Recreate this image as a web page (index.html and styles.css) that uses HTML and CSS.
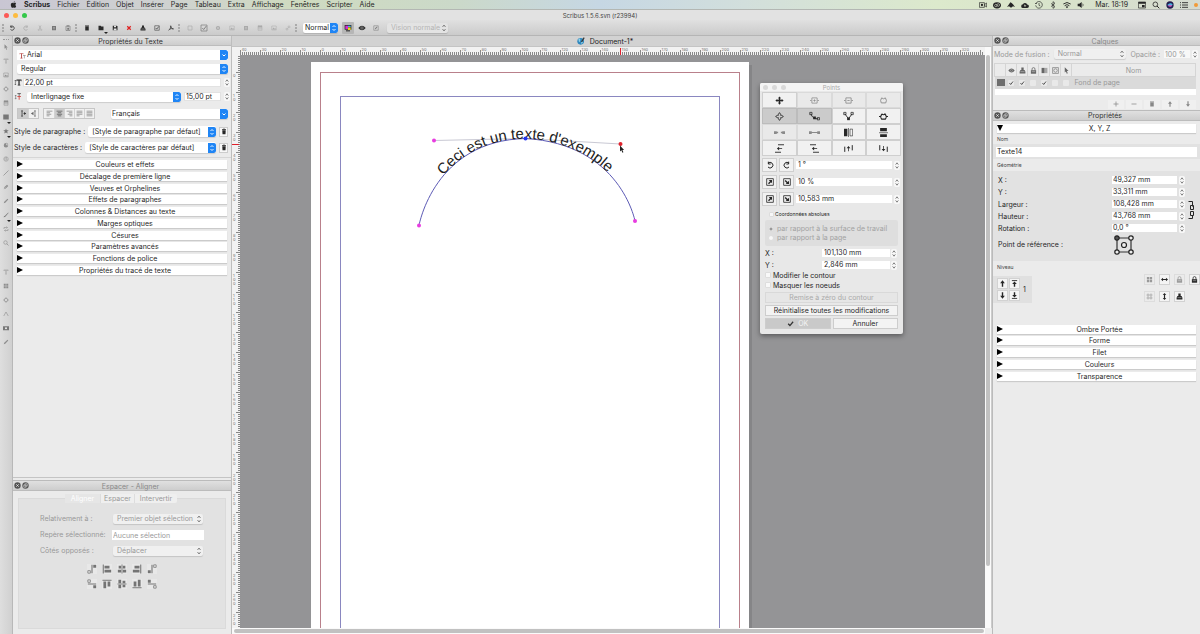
FILE: index.html
```html
<!DOCTYPE html>
<html lang="fr">
<head>
<meta charset="utf-8">
<title>Scribus 1.5.6.svn (r23994)</title>
<link rel="stylesheet" href="styles.css">
</head>
<body>
<svg class="defs" aria-hidden="true">
<symbol id="apple" viewBox="0 0 12 12"><path fill="currentColor" d="M8.2.5C7 .6 6 1.700 6.200 2.900 7.300 2.900 8.300 1.700 8.200.5M9.400 6.300c0-1.300 1-1.900 1.100-2C9.800 3.300 8.800 3.200 8.400 3.200 7.500 3.100 6.600 3.700 6.100 3.700S4.900 3.200 4.200 3.200C2.800 3.200 1.400 4.400 1.400 6.700 1.400 9 3 11.700 4.200 11.700 4.900 11.700 5.200 11.200 6.100 11.200s1.200.5 1.900.5C9.300 11.700 10.300 9.700 10.600 8.800 9.700 8.400 9.400 7.500 9.400 6.300"/></symbol>
<symbol id="undo" viewBox="0 0 12 12"><path d="M3 3.500A4.200 4.200 0 1 1 3 9M3.500 1v3.500H7" fill="none" stroke="currentColor" stroke-width="1.500"/></symbol>
<symbol id="redo" viewBox="0 0 12 12"><path d="M9 3.500A4.200 4.200 0 1 0 9 9M8.500 1v3.500H5" fill="none" stroke="currentColor" stroke-width="1.500"/></symbol>
<symbol id="cut" viewBox="0 0 12 12"><path d="M4 1l4 8M8 1L4 9" fill="none" stroke="currentColor" stroke-width="1.200"/><circle cx="3.500" cy="9.800" r="1.300" fill="none" stroke="currentColor"/><circle cx="8.500" cy="9.800" r="1.300" fill="none" stroke="currentColor"/></symbol>
<symbol id="box" viewBox="0 0 12 12"><path d="M2 2h8v8.500H2z" fill="currentColor"/><path d="M4 5h4M4 7.500h4" stroke="#ddd" stroke-width=".7"/></symbol>
<symbol id="frame" viewBox="0 0 12 12"><path d="M2 2h8v8H2z" fill="none" stroke="currentColor" stroke-width="1.300"/></symbol>
<symbol id="paste" viewBox="0 0 12 12"><path d="M2 2h8v9H2z" fill="none" stroke="currentColor" stroke-width="1.300"/><path d="M4 1h4v2H4zM4.500 5.500h3.500v4H4.500z" fill="currentColor"/></symbol>
<symbol id="file" viewBox="0 0 12 12"><path d="M2.500 2.800h7v8h-7zM2 1.200h8v1.200H2z" fill="currentColor"/></symbol>
<symbol id="folder" viewBox="0 0 12 12"><path d="M1 1.500h4.500L6.500 3H11v7.500H1z" fill="currentColor"/></symbol>
<symbol id="save" viewBox="0 0 12 12"><path d="M1.500 1.500h8L11 3v7.500H1.500z" fill="currentColor"/><path d="M4 1.500h4v3H4zM3.500 7H9v3.500H3.500z" fill="#e5e5e5"/></symbol>
<symbol id="cross" viewBox="0 0 12 12"><path d="M2.500 2.500l7 7M9.500 2.500l-7 7" stroke="currentColor" stroke-width="2.500"/></symbol>
<symbol id="print" viewBox="0 0 12 12"><path d="M4 1h4v4h1.500L11 8v3H1V8l1.500-3H4z" fill="currentColor"/><path d="M2.500 8h7" stroke="#ddd" stroke-width=".8"/></symbol>
<symbol id="check" viewBox="0 0 12 12"><path d="M1.500 1.500h9v9h-9z" fill="none" stroke="currentColor"/><path d="M3.500 6l2 2.300L9.500 3" fill="none" stroke="currentColor" stroke-width="1.300"/></symbol>
<symbol id="tick" viewBox="0 0 12 12"><path d="M2 6.500L5 9.500 10.500 3" fill="none" stroke="currentColor" stroke-width="2.200"/></symbol>
<symbol id="pdf" viewBox="0 0 12 12"><path d="M5 1.500c1 4 2.500 6 6 6.500M5.800 1.500C6 5 4 9 1 10.500M3 8.500Q6.500 6.500 11 7.500" fill="none" stroke="currentColor" stroke-width="1.400"/></symbol>
<symbol id="circle" viewBox="0 0 12 12"><circle cx="6" cy="6" r="4.200" fill="currentColor"/><path d="M4 6h4M6 4v4" stroke="#ddd"/></symbol>
<symbol id="image" viewBox="0 0 12 12"><path d="M1.500 2h9v8h-9z" fill="none" stroke="currentColor"/><path d="M2.500 9l2.500-4 2 2.500L8.500 6l1.500 3z" fill="currentColor"/></symbol>
<symbol id="link" viewBox="0 0 12 12"><path d="M4 8l4-4M5.500 4L8 1.500 10.500 4 8 6.500M4 5.500L1.500 8 4 10.500 6.500 8" fill="none" stroke="currentColor" stroke-width="1.300"/></symbol>
<symbol id="eye" viewBox="0 0 12 12"><path d="M.5 6Q6-1 11.500 6 6 13 .5 6" fill="currentColor"/><circle cx="6" cy="6" r="1.800" fill="none" stroke="#ccc" stroke-width=".7"/></symbol>
<symbol id="color" viewBox="0 0 12 12"><path d="M1 1.500h10v7H1z" fill="#222"/><path d="M2 2.500h4v5H2z" fill="#d22bd2"/><path d="M6 2.500h4v2H6z" fill="#40b5ea"/><path d="M6 5h4v4H6z" fill="#e9d31d"/><path d="M3 9.500h6v1.500H3z" fill="#222"/></symbol>
<symbol id="edit" viewBox="0 0 12 12"><path d="M1.500 1.500h9v9h-9z" fill="none" stroke="currentColor"/><path d="M4 8.500L4.500 6 8 3l1 1.200L5.800 8z" fill="currentColor"/></symbol>
<symbol id="cursor" viewBox="0 0 12 12"><path d="M3 .5v9l2-1.800 1.500 3.800 1.700-.7L6.600 7H9.500z" fill="currentColor"/></symbol>
<symbol id="ttool" viewBox="0 0 12 12"><path d="M1.500 1.500h9v2.500H9.700L9 2.600H6.700v7l1.500.8H3.800l1.500-.8v-7H3L2.300 4h-.8z" fill="currentColor"/></symbol>
<symbol id="gear" viewBox="0 0 12 12"><circle cx="6" cy="6" r="3.500" fill="none" stroke="currentColor" stroke-width="1.300"/><path d="M6 .8v2M6 9.200v2M.8 6h2M9.200 6h2" stroke="currentColor" stroke-width="1.500"/></symbol>
<symbol id="table" viewBox="0 0 12 12"><path d="M2 1.500h8v9H2zM2 4.500h8M2 7.500h8" fill="none" stroke="currentColor"/><path d="M2 1.500h8v3H2z" fill="currentColor"/></symbol>
<symbol id="shape" viewBox="0 0 12 12"><path d="M.5 1h11v10H.5z" fill="currentColor"/></symbol>
<symbol id="star" viewBox="0 0 12 12"><path d="M6 .8l1.500 3.700 4 .2-3.100 2.500 1.100 3.900L6 9l-3.500 2.100 1.100-3.900L.5 4.700l4-.2z" fill="currentColor"/></symbol>
<symbol id="pie" viewBox="0 0 12 12"><path d="M6 2v4l4.500 1A4.500 4.500 0 1 1 6 2" fill="currentColor"/><path d="M7 1v3.800h3.800" fill="currentColor"/></symbol>
<symbol id="spiral" viewBox="0 0 12 12"><circle cx="6" cy="6" r="4.500" fill="none" stroke="currentColor"/><path d="M6 6q2-2 2 .5T5 8 4 4.500 8 3" fill="none" stroke="currentColor"/></symbol>
<symbol id="line" viewBox="0 0 12 12"><path d="M1 11L11 1" stroke="currentColor" stroke-width="1.500"/></symbol>
<symbol id="pen" viewBox="0 0 12 12"><path d="M1.500 10.500L3 6l5-4.500 2.500 2.300L5.500 9z" fill="currentColor"/><path d="M1.500 10.500L7 5" stroke="#ddd" stroke-width=".7"/></symbol>
<symbol id="pencil" viewBox="0 0 12 12"><path d="M1.500 10.500L2.500 7.500l6.500-6 1.500 1.500L4.500 9.500z" fill="currentColor"/></symbol>
<symbol id="brush" viewBox="0 0 12 12"><path d="M1 10.500q1-3 3-3L10.500 1 11 2 5.500 8.500q-1 2-4.500 2" fill="currentColor"/></symbol>
<symbol id="rotate" viewBox="0 0 12 12"><path d="M2 6V3h6.500M10 6v3H3.500M7 1l2 2-2 2M5 7L3 9l2 2" fill="none" stroke="currentColor" stroke-width="1.200"/></symbol>
<symbol id="search" viewBox="0 0 12 12"><circle cx="5" cy="5" r="3.500" fill="none" stroke="currentColor" stroke-width="1.200"/><path d="M7.500 7.500L11 11" stroke="currentColor" stroke-width="1.500"/></symbol>
<symbol id="grid4" viewBox="0 0 12 12"><path d="M1.500 1.500h4v4h-4zM6.500 1.500h4v4h-4zM1.500 6.500h4v4h-4zM6.500 6.500h4v4h-4z" fill="currentColor"/></symbol>
<symbol id="grid4o" viewBox="0 0 12 12"><path d="M2 2h3v3H2zM7 2h3v3H7zM2 7h3v3H2zM7 7h3v3H7z" fill="none" stroke="currentColor"/></symbol>
<symbol id="measure" viewBox="0 0 12 12"><path d="M1.500 10L6 2l4.500 8" fill="none" stroke="currentColor" stroke-width="1.200"/></symbol>
<symbol id="camera" viewBox="0 0 12 12"><path d="M0 2.500h12v8H0z" fill="currentColor"/><circle cx="6" cy="6.500" r="2" fill="#eee"/></symbol>
<symbol id="trash" viewBox="0 0 12 12"><path d="M2 2h8M4.500 1h3" stroke="currentColor" stroke-width="1.500"/><path d="M2.500 3.500h7L9 11.500H3z" fill="currentColor"/></symbol>
<symbol id="tfont" viewBox="0 0 12 12"><path d="M1 2h6.500v2H6.700L6.500 3H5v7h1v1H2.500v-1h1V3H2L1.800 4H1z" fill="#b4413d"/><path d="M7 6h4.500M9.200 6v5" stroke="#777"/></symbol>
<symbol id="tsize" viewBox="0 0 12 12"><path d="M3.500 1H12v3h-.9L10.500 2.500H8.800V10H10v1H5.500v-1h1.200V2.500H5L4.400 4h-.9z" fill="#222"/><path d="M1.500 2v8M.2 3.500L1.500 2l1.300 1.500M.2 8.500l1.300 1.500 1.300-1.500" fill="none" stroke="#222" stroke-width=".8"/></symbol>
<symbol id="tlead" viewBox="0 0 12 12"><path d="M5 1h6M8 1v4" stroke="#444" stroke-width="1.300"/><path d="M5 6h6M8 6v5.500" stroke="#d0413d" stroke-width="1.500"/><path d="M2 4v6M1 5l1-1.500L3 5M1 9l1 1.500L3 9" fill="none" stroke="#444" stroke-width=".8"/></symbol>
<symbol id="ltr" viewBox="0 0 12 12"><path d="M2 1.500h3M2 10.500h3M3.500 1.500v9M6 6h4" stroke="currentColor" stroke-width="1.300"/><path d="M7 3.500L10.500 6 7 8.500z" fill="currentColor"/></symbol>
<symbol id="rtl" viewBox="0 0 12 12"><path d="M7 1.500h3M7 10.500h3M8.500 1.500v9" stroke="currentColor" stroke-width="1.300"/><path d="M6 3L1.500 6 6 9z" fill="currentColor"/></symbol>
<symbol id="aleft" viewBox="0 0 12 12"><path d="M1 2h10M1 4.700h6M1 7.300h8M1 10h5" stroke="currentColor"/></symbol>
<symbol id="acenter" viewBox="0 0 12 12"><path d="M1 2h10M3 4.700h6M1.500 7.300h9M3 10h6" stroke="currentColor"/></symbol>
<symbol id="aright" viewBox="0 0 12 12"><path d="M1 2h10M5 4.700h6M3 7.300h8M6 10h5" stroke="currentColor"/></symbol>
<symbol id="ajust" viewBox="0 0 12 12"><path d="M1 2h10M1 4.700h10M1 7.300h10M1 10h5" stroke="currentColor"/></symbol>
<symbol id="aforce" viewBox="0 0 12 12"><path d="M1 2h10M1 4.700h10M1 7.300h10M1 10h10" stroke="currentColor"/></symbol>
<symbol id="close" viewBox="0 0 12 12"><circle cx="6" cy="6" r="5.500" fill="currentColor"/><path d="M4 4l4 4M8 4L4 8" stroke="#e8e8e8" stroke-width="1.500"/></symbol>
<symbol id="float" viewBox="0 0 12 12"><circle cx="6" cy="6" r="5.500" fill="currentColor"/><path d="M5 3h4v4H5zM3 5h4v4H3z" fill="none" stroke="#e0e0e0" stroke-width=".9"/></symbol>
<symbol id="steps" viewBox="0 0 6 10"><path d="M1.500 4L3 2l1.500 2M1.500 6L3 8l1.500-2" fill="none" stroke="currentColor" stroke-width=".9"/></symbol>
<symbol id="d1" viewBox="0 0 12 12"><path d="M1 8h3v3H1z" fill="none" stroke="currentColor" stroke-width=".9"/><path d="M6 1v10" stroke="currentColor" stroke-width="1.300"/><path d="M7.500 1h3.500v3.500H7.500z" fill="currentColor"/></symbol>
<symbol id="d2" viewBox="0 0 12 12"><path d="M1.500 .5v11" stroke="currentColor" stroke-width="1.300"/><path d="M3 2h6v3.300H3zM3 7h8v3.300H3z" fill="currentColor"/></symbol>
<symbol id="d3" viewBox="0 0 12 12"><path d="M6 .5v11" stroke="currentColor"/><path d="M2 2h3v3.300H2zM7 2h3v3.300H7zM1 7h4v3.300H1zM7 7h4v3.300H7z" fill="currentColor"/></symbol>
<symbol id="plus4" viewBox="0 0 12 12"><path d="M6 .5L8 3H7v2h2V4l2.500 2L9 8V7H7v2h1l-2 2.500L4 9h1V7H3v1L.5 6 3 4v1h2V3H4z" fill="currentColor"/></symbol>
<symbol id="move4" viewBox="0 0 12 12"><path d="M6 .8L7.500 3v1.500H9L11.200 6 9 7.500H7.500V9L6 11.200 4.500 9V7.500H3L.8 6 3 4.500h1.500V3z" fill="none" stroke="currentColor" stroke-width="1.100"/></symbol>
<symbol id="nadd" viewBox="0 0 12 12"><path d="M2.500 2.500h7v7h-7zM0 6h2M10 6h2M6 4.500v3M4.500 6h3" fill="none" stroke="currentColor"/></symbol>
<symbol id="ndel" viewBox="0 0 12 12"><path d="M2.500 2.500h7v7h-7zM0 6h2M10 6h2M4.500 6h3" fill="none" stroke="currentColor" stroke-width="1.100"/></symbol>
<symbol id="nreset" viewBox="0 0 12 12"><path d="M3.500 2.500Q1 6 3 9.200h6Q11 6 8.500 2.500 6 5 3.500 2.500" fill="none" stroke="currentColor" stroke-width="1.200"/></symbol>
<symbol id="nsmooth" viewBox="0 0 12 12"><path d="M2 3q2 6 8 5.500" fill="none" stroke="currentColor"/><path d="M.8 1.500h2.500V4H.8zM9 7.200h2.500v2.500H9z" fill="none" stroke="currentColor" stroke-width=".8"/><path d="M4.500 6h3v3h-3z" fill="currentColor"/></symbol>
<symbol id="ncorner" viewBox="0 0 12 12"><path d="M2 3l4 5.500L10 3" fill="none" stroke="currentColor"/><path d="M.8 1.500h2.500V4H.8zM8.700 1.500h2.500V4H8.700z" fill="none" stroke="currentColor" stroke-width=".8"/><path d="M4.500 7h3v3h-3z" fill="currentColor"/></symbol>
<symbol id="nloop" viewBox="0 0 12 12"><path d="M4 2.500Q1 6 3.500 9.500h5Q11 6 8 2.500 6 5 4 2.500M0 6h2.500M9.500 6H12" fill="none" stroke="currentColor" stroke-width="1.400"/></symbol>
<symbol id="nopen" viewBox="0 0 12 12"><path d="M0 4.500h3v3H0zM9 4.500h3v3H9zM3 5.300h1.500v1.400H3zM7.500 5.300H9v1.400H7.500z" fill="currentColor"/></symbol>
<symbol id="nclose" viewBox="0 0 12 12"><path d="M0 4.500h3v3H0zM9 4.500h3v3H9zM3 5.500h6v1H3z" fill="currentColor"/></symbol>
<symbol id="mirh" viewBox="0 0 12 12"><path d="M0 1h4.500v10H0z" fill="currentColor"/><path d="M6 0v12M8 1.500h3.500v9H8z" fill="none" stroke="currentColor" stroke-width=".8"/></symbol>
<symbol id="mirv" viewBox="0 0 12 12"><path d="M1.500 0h9v4.300h-9zM1.500 8.300h9V12h-9z" fill="currentColor"/><path d="M0 6.300h12" stroke="currentColor" stroke-width=".8"/></symbol>
<symbol id="shr" viewBox="0 0 12 12"><path d="M4 1h8M0 11h8" stroke="currentColor" stroke-width="1.200"/><path d="M2.500 6l3-2.500v2h4v1h-4v2z" fill="currentColor"/></symbol>
<symbol id="shl" viewBox="0 0 12 12"><path d="M0 1h8M4 11h8" stroke="currentColor" stroke-width="1.200"/><path d="M2.500 6l3-2.500v2h4v1h-4v2z" fill="currentColor"/></symbol>
<symbol id="shu" viewBox="0 0 12 12"><path d="M1 3.500v7M11 1.500v7" stroke="currentColor" stroke-width="1.300"/><path d="M6 2.500l2.500 3h-2v4h-1v-4h-2z" fill="currentColor"/></symbol>
<symbol id="shd" viewBox="0 0 12 12"><path d="M1 1.500v7M11 3.500v7" stroke="currentColor" stroke-width="1.300"/><path d="M6 9.500l2.500-3h-2v-4h-1v4h-2z" fill="currentColor"/></symbol>
<symbol id="grow" viewBox="0 0 12 12"><path d="M1 1h10v10H1z" fill="none" stroke="currentColor" stroke-width="1.200"/><path d="M4 3h5v5L7.500 6.500 4.500 9.500 3 8l3-3z" fill="currentColor"/></symbol>
<symbol id="shrink" viewBox="0 0 12 12"><path d="M1 1h10v10H1z" fill="none" stroke="currentColor" stroke-width="1.200"/><path d="M9 4v5H4l1.500-1.500-3-3L4 3l3 3z" fill="currentColor"/></symbol>
<symbol id="lock" viewBox="0 0 12 12"><path d="M1.500 5.500h9v6h-9z" fill="currentColor"/><path d="M3.500 6V3.500a2.500 2.500 0 0 1 5 0V6" fill="none" stroke="currentColor" stroke-width="1.300"/><path d="M3 8h6" stroke="#ddd" stroke-width=".8"/></symbol>
<symbol id="half" viewBox="0 0 12 12"><path d="M1 1.500h5v9H1z" fill="currentColor"/><path d="M6 1.500h5v9H6z" fill="currentColor" opacity=".5"/></symbol>
<symbol id="outline" viewBox="0 0 12 12"><path d="M1 1h10v10H1z" fill="none" stroke="currentColor"/><circle cx="6" cy="6" r="3" fill="none" stroke="currentColor"/></symbol>
<symbol id="plus" viewBox="0 0 12 12"><path d="M6 1v10M1 6h10" stroke="currentColor" stroke-width="1.500"/></symbol>
<symbol id="minus" viewBox="0 0 12 12"><path d="M1 6h10" stroke="currentColor" stroke-width="1.500"/></symbol>
<symbol id="up" viewBox="0 0 12 12"><path d="M6 .5l4 5H7.200v6H4.800v-6H2z" fill="currentColor"/></symbol>
<symbol id="down" viewBox="0 0 12 12"><path d="M6 11.500l4-5H7.200v-6H4.800v6H2z" fill="currentColor"/></symbol>
<symbol id="top" viewBox="0 0 12 12"><path d="M1.500 1h9" stroke="currentColor" stroke-width="1.500"/><path d="M6 2.500L10 7H7.200v4.500H4.800V7H2z" fill="currentColor"/></symbol>
<symbol id="bottom" viewBox="0 0 12 12"><path d="M1.500 11h9" stroke="currentColor" stroke-width="1.500"/><path d="M6 9.500L10 5H7.200V.5H4.800V5H2z" fill="currentColor"/></symbol>
<symbol id="fliph" viewBox="0 0 12 12"><path d="M0 6l3.500-3v2h5V3L12 6 8.500 9V7h-5v2z" fill="currentColor"/></symbol>
<symbol id="flipv" viewBox="0 0 12 12"><path d="M6 0L3 3.500h2v5H3L6 12l3-3.500H7v-5h2z" fill="currentColor"/></symbol>
<symbol id="chain" viewBox="0 0 10 20"><path d="M1.500 1.500h4v5M3.500 5.500h3v4h-3zM3.500 11.500h3v4h-3zM1.500 18.500h4v-3" fill="none" stroke="currentColor"/></symbol>
<symbol id="fox" viewBox="0 0 12 12"><path d="M0 9l3-4 2-3 2 1 2 2 3 4-3-1-3 2-3-2z" fill="currentColor"/></symbol>
<symbol id="cloud" viewBox="0 0 12 12"><path d="M3 10.500a2.700 2.700 0 0 1 0-5.500 3.300 3.300 0 0 1 6.300.3 2.600 2.600 0 0 1 0 5.200z" fill="currentColor"/><path d="M6 9V6M4.700 7L6 5.700 7.300 7" fill="none" stroke="#e5ecd8"/></symbol>
<symbol id="cc" viewBox="0 0 12 12"><ellipse cx="6" cy="6.500" rx="6" ry="4.700" fill="currentColor"/><circle cx="4.300" cy="6.800" r="1.800" fill="none" stroke="#e5ecd8" stroke-width=".8"/><circle cx="7.800" cy="6" r="2" fill="none" stroke="#e5ecd8" stroke-width=".8"/></symbol>
<symbol id="video" viewBox="0 0 12 12"><path d="M.6 2.500h7.500v7H.6zM8.500 5l3-2v6l-3-2z" fill="none" stroke="currentColor"/><circle cx="4.400" cy="6" r="1.700" fill="currentColor"/></symbol>
<symbol id="clock" viewBox="0 0 12 12"><path d="M1.500 3.500A5 5 0 1 1 1 6.500M6 3v3.500l2 1M0 3l1.500 1.500L3 3" fill="none" stroke="currentColor"/></symbol>
<symbol id="blue" viewBox="0 0 12 12"><path d="M3 3.500l6 5L6 11V1l3 2.500-6 5" fill="none" stroke="currentColor"/></symbol>
<symbol id="wifi" viewBox="0 0 12 12"><path d="M.5 4.500Q6 0 11.500 4.500M2.500 7Q6 4 9.500 7" fill="none" stroke="currentColor" stroke-width="1.400"/><path d="M4 8.700q2-1.500 4 0L6 11z" fill="currentColor"/></symbol>
<symbol id="sound" viewBox="0 0 12 12"><path d="M1 4.300h2.500L7 1.500v9L3.500 7.700H1z" fill="currentColor"/><path d="M8.500 4q1.500 2 0 4" fill="none" stroke="currentColor"/></symbol>
<symbol id="win" viewBox="0 0 12 12"><path d="M.6 1.500h10.800v9H.6z" fill="none" stroke="currentColor"/><path d="M.6 1.500h10.800V4H.6zM6 6h4v3.500H6z" fill="currentColor"/></symbol>
<symbol id="siri" viewBox="0 0 12 12"><circle cx="6" cy="6" r="5.500" fill="#23204f"/><path d="M2 6q4-5 8-1-2 5-8 1" fill="#49b7e8"/><path d="M2.500 7q4-2 7 0-3 3-7 0" fill="#d55bc0"/></symbol>
<symbol id="list" viewBox="0 0 12 12"><path d="M0 2.500h1.500M3 2.500h9M0 6h1.500M3 6h9M0 9.500h1.500M3 9.500h9" stroke="currentColor" stroke-width="1.300"/></symbol>
<symbol id="globe" viewBox="0 0 12 12"><circle cx="5.500" cy="6.500" r="5" fill="#2d86bd"/><path d="M2 3q3-2 3 1T3 8zM6 7q3-1 3 1l-2 3z" fill="#8fd0e8"/><path d="M6 7L10 .5l1.500 1L7.500 8z" fill="#3a3430"/></symbol>
</svg>

<nav class="menubar" aria-label="Menu">
<svg class="ic"><use href="#apple"/></svg><b>Scribus</b><span>Fichier</span><span>Édition</span><span>Objet</span><span>Insérer</span><span>Page</span><span>Tableau</span><span>Extra</span><span>Affichage</span><span>Fenêtres</span><span>Scripter</span><span>Aide</span>
<div class="status"><svg class="ic"><use href="#video"/></svg><svg class="ic"><use href="#cc"/></svg><svg class="ic"><use href="#fox"/></svg><svg class="ic"><use href="#cloud"/></svg><svg class="ic"><use href="#clock"/></svg><svg class="ic"><use href="#blue"/></svg><svg class="ic"><use href="#wifi"/></svg><svg class="ic"><use href="#sound"/></svg><time>Mar. 18:19</time><svg class="ic"><use href="#win"/></svg><svg class="ic"><use href="#search"/></svg><svg class="ic"><use href="#siri"/></svg><svg class="ic"><use href="#list"/></svg><i class="dot"></i></div>
</nav>
<header class="titlebar"><div class="lights"><i class="red"></i><i class="yellow"></i><i class="green"></i></div><h1>Scribus 1.5.6.svn (r23994)</h1><div></div></header>
<div class="toolbar" role="toolbar">
<i class="grip"></i>
<button aria-label="Annuler"><svg class="ic"><use href="#undo"/></svg></button><button disabled aria-label="Rétablir"><svg class="ic"><use href="#redo"/></svg></button><button disabled aria-label="Couper"><svg class="ic"><use href="#cut"/></svg></button><button class="mid" aria-label="Copier"><svg class="ic"><use href="#box"/></svg></button><button class="mid" aria-label="Coller"><svg class="ic"><use href="#paste"/></svg></button>
<i class="grip"></i>
<button aria-label="Nouveau"><svg class="ic"><use href="#file"/></svg></button><button class="drop" aria-label="Ouvrir"><svg class="ic"><use href="#folder"/></svg></button><button aria-label="Enregistrer"><svg class="ic"><use href="#save"/></svg></button><button class="danger" aria-label="Fermer"><svg class="ic"><use href="#cross"/></svg></button><button aria-label="Imprimer"><svg class="ic"><use href="#print"/></svg></button><button aria-label="Vérifier"><svg class="ic"><use href="#check"/></svg></button><button aria-label="PDF"><svg class="ic"><use href="#pdf"/></svg></button>
<i class="grip"></i>
<button disabled aria-label="Bouton PDF"><svg class="ic"><use href="#frame"/></svg></button><button class="mid big" aria-label="Case PDF"><svg class="ic"><use href="#check"/></svg></button><button disabled aria-label="Radio PDF"><svg class="ic"><use href="#circle"/></svg></button><button disabled aria-label="Texte PDF"><svg class="ic"><use href="#image"/></svg></button><button disabled aria-label="Liste PDF"><svg class="ic"><use href="#box"/></svg></button><button disabled aria-label="Choix PDF"><svg class="ic"><use href="#table"/></svg></button><button disabled aria-label="Note PDF"><svg class="ic"><use href="#image"/></svg></button><button disabled aria-label="Lien PDF"><svg class="ic"><use href="#link"/></svg></button>
<i class="grip last"></i>
<select class="sel quality" aria-label="Qualité"><option>Normal</option></select>
<button class="on" aria-label="Couleurs"><svg class="ic"><use href="#color"/></svg></button><button class="big" aria-label="Aperçu"><svg class="ic"><use href="#eye"/></svg></button><button class="mid" aria-label="Éditer"><svg class="ic"><use href="#edit"/></svg></button>
<select class="sel plain vision" disabled aria-label="Vision"><option>Vision normale</option></select>
</div>

<main class="work">
<aside class="tools" aria-label="Outils"><i class="hgrip"></i>
<svg class="ic"><use href="#cursor"/></svg><svg class="ic"><use href="#ttool"/></svg><svg class="ic"><use href="#image"/></svg><svg class="ic"><use href="#gear"/></svg><svg class="ic"><use href="#table"/></svg><span class="drop"><svg class="ic"><use href="#shape"/></svg></span><span class="drop"><svg class="ic"><use href="#star"/></svg></span><svg class="ic"><use href="#pie"/></svg><svg class="ic"><use href="#spiral"/></svg><svg class="ic"><use href="#line"/></svg><svg class="ic"><use href="#pen"/></svg><svg class="ic"><use href="#pencil"/></svg><span class="drop"><svg class="ic"><use href="#brush"/></svg></span><svg class="ic"><use href="#rotate"/></svg><svg class="ic"><use href="#search"/></svg>
<i class="space"></i>
<svg class="ic"><use href="#ttool"/></svg><svg class="ic"><use href="#grid4"/></svg><svg class="ic"><use href="#gear"/></svg><svg class="ic"><use href="#measure"/></svg><svg class="ic dark"><use href="#camera"/></svg><svg class="ic"><use href="#pencil"/></svg>
</aside>

<section class="left">
<div class="textprops">
<div class="dockhead"><svg class="ic"><use href="#close"/></svg><svg class="ic"><use href="#float"/></svg><h2>Propriétés du Texte</h2></div>
<div class="form">
<div class="field font"><svg class="ic"><use href="#tfont"/></svg><select class="sel combo" aria-label="Police"><option>Arial</option></select></div>
<div class="field"><select class="sel wide" aria-label="Style"><option>Regular</option></select></div>
<div class="field size"><svg class="ic"><use href="#tsize"/></svg><input value="22,00 pt" aria-label="Taille"><svg class="steps"><use href="#steps"/></svg></div>
<div class="field size"><svg class="ic"><use href="#tlead"/></svg><select class="sel lead" aria-label="Interlignage"><option>Interlignage fixe</option></select><input class="short" value="15,00 pt" aria-label="Valeur"><svg class="steps"><use href="#steps"/></svg></div>
<div class="field align"><div class="seg"><button class="on" aria-label="Gauche à droite"><svg class="ic"><use href="#ltr"/></svg></button><button aria-label="Droite à gauche"><svg class="ic"><use href="#rtl"/></svg></button></div><div class="seg"><button aria-label="Gauche"><svg class="ic"><use href="#aleft"/></svg></button><button class="on" aria-label="Centrer"><svg class="ic"><use href="#acenter"/></svg></button><button aria-label="Droite"><svg class="ic"><use href="#aright"/></svg></button><button aria-label="Justifier"><svg class="ic"><use href="#ajust"/></svg></button><button aria-label="Forcer"><svg class="ic"><use href="#aforce"/></svg></button></div><select class="sel combo lang" aria-label="Langue"><option>Français</option></select></div>
<div class="field style"><label for="ps">Style de paragraphe :</label><select class="sel" id="ps"><option>[Style de paragraphe par défaut]</option></select><button class="btn" aria-label="Effacer"><svg class="ic"><use href="#trash"/></svg></button></div>
<div class="field style"><label for="cs">Style de caractères :</label><select class="sel" id="cs"><option>[Style de caractères par défaut]</option></select><button class="btn" aria-label="Effacer"><svg class="ic"><use href="#trash"/></svg></button></div>
</div>
<div class="folds ten"><button>Couleurs et effets</button><button>Décalage de première ligne</button><button>Veuves et Orphelines</button><button>Effets de paragraphes</button><button>Colonnes &amp; Distances au texte</button><button>Marges optiques</button><button>Césures</button><button>Paramètres avancés</button><button>Fonctions de police</button><button>Propriétés du tracé de texte</button></div>
</div>
<div class="aligner">
<div class="dockhead dim"><svg class="ic"><use href="#close"/></svg><svg class="ic"><use href="#float"/></svg><h2>Espacer - Aligner</h2></div>
<div class="tabs"><button class="cur" disabled>Aligner</button><button disabled>Espacer</button><button disabled>Intervertir</button></div>
<div class="group">
<div class="pairs"><label for="rel">Relativement à :</label><select class="sel plain" id="rel" disabled><option>Premier objet sélection</option></select>
<label for="gd">Repère sélectionné:</label><input id="gd" value="Aucune sélection" disabled>
<label for="op">Côtés opposés :</label><select class="sel plain" id="op" disabled><option>Déplacer</option></select></div>
<div class="dist"><svg class="ic"><use href="#d1"/></svg><svg class="ic"><use href="#d2"/></svg><svg class="ic"><use href="#d3"/></svg><svg class="ic flip"><use href="#d2"/></svg><svg class="ic half-turn"><use href="#d1"/></svg><svg class="ic quarter"><use href="#d1"/></svg><svg class="ic quarter"><use href="#d2"/></svg><svg class="ic quarter"><use href="#d3"/></svg><svg class="ic back"><use href="#d2"/></svg><svg class="ic back"><use href="#d1"/></svg></div>
</div>
</div>
</section>

<section class="doc">
<div class="doctab"><svg class="ic"><use href="#globe"/></svg><span>Document-1*</span></div>
<svg class="hruler" id="hruler"></svg>
<svg class="vruler" id="vruler"></svg>
<div class="canvas">
<svg class="page">
<rect class="shade" x="509" y="10" width="3" height="100%"/>
<rect x="71" y="7" width="438" height="100%" fill="#fff"/>
<rect class="margin-red" x="80.500" y="17.500" width="419" height="120%"/>
<rect class="margin-blue" x="100.500" y="41.500" width="379" height="120%"/>
<path class="handle" d="M194 85.500L285.500 83.500 380.500 89"/>
<path id="arc" class="arc" d="M179 170.500C179 170.500 194 85.500 285.500 83.500 380.500 89 395 166 395 166"/>
<text class="sample"><textPath href="#arc" startOffset="56">Ceci est un texte d'exemple</textPath></text>
<g fill="#e83ce0"><circle cx="179" cy="170.500" r="2"/><circle cx="194" cy="85.500" r="2"/><circle cx="395" cy="166" r="2"/></g>
<circle cx="285.500" cy="83.500" r="2" fill="#2433f0"/><circle cx="380.500" cy="89" r="2" fill="#e0222c"/>
<path d="M380 90.500v6l1.400-1.200 1 2.400 1-.4-1-2.400h1.700z" fill="#222"/>
</svg>
<form class="dialog">
<div class="dlghead"><i></i><i></i><i></i><h2>Points</h2></div>
<div class="nodes"><button type="button"><svg class="ic"><use href="#plus4"/></svg></button><button type="button" disabled><svg class="ic"><use href="#nadd"/></svg></button><button type="button" disabled><svg class="ic"><use href="#ndel"/></svg></button><button type="button" disabled><svg class="ic"><use href="#nreset"/></svg></button><button type="button" class="on"><svg class="ic"><use href="#move4"/></svg></button><button type="button" class="on"><svg class="ic big"><use href="#nsmooth"/></svg></button><button type="button"><svg class="ic big"><use href="#ncorner"/></svg></button><button type="button"><svg class="ic"><use href="#nloop"/></svg></button><button type="button" disabled><svg class="ic big"><use href="#nopen"/></svg></button><button type="button" disabled><svg class="ic big"><use href="#nclose"/></svg></button><button type="button"><svg class="ic"><use href="#mirh"/></svg></button><button type="button"><svg class="ic"><use href="#mirv"/></svg></button><button type="button"><svg class="ic"><use href="#shr"/></svg></button><button type="button"><svg class="ic"><use href="#shl"/></svg></button><button type="button"><svg class="ic"><use href="#shu"/></svg></button><button type="button"><svg class="ic"><use href="#shd"/></svg></button></div>
<div class="xform"><button type="button"><svg class="ic"><use href="#undo"/></svg></button><button type="button"><svg class="ic"><use href="#redo"/></svg></button><input value="1 °" aria-label="Angle"><svg class="steps"><use href="#steps"/></svg>
<button type="button"><svg class="ic"><use href="#grow"/></svg></button><button type="button"><svg class="ic"><use href="#shrink"/></svg></button><input value="10 %" aria-label="Échelle"><svg class="steps"><use href="#steps"/></svg>
<button type="button"><svg class="ic"><use href="#grow"/></svg></button><button type="button"><svg class="ic"><use href="#shrink"/></svg></button><input value="10,583 mm" aria-label="Décalage"><svg class="steps"><use href="#steps"/></svg></div>
<label class="opt small"><input type="checkbox">Coordonnées absolues</label>
<fieldset disabled><label class="opt"><input type="radio" name="rel" checked>par rapport à la surface de travail</label><label class="opt"><input type="radio" name="rel">par rapport à la page</label></fieldset>
<div class="xy"><label for="px">X :</label><input id="px" value="101,130 mm"><svg class="steps"><use href="#steps"/></svg><label for="py">Y :</label><input id="py" value="2,846 mm"><svg class="steps"><use href="#steps"/></svg></div>
<label class="opt"><input type="checkbox">Modifier le contour</label>
<label class="opt"><input type="checkbox">Masquer les noeuds</label>
<div class="actions"><button type="button" class="full" disabled>Remise à zéro du contour</button><button type="button" class="full">Réinitialise toutes les modifications</button><button type="button" class="ok"><svg class="ic"><use href="#tick"/></svg>OK</button><button type="button">Annuler</button></div>
</form>
</div>
<div class="vscroll"><i></i></div>
<div class="hscroll"><i></i></div>
</section>

<aside class="right">
<div class="layers">
<div class="dockhead dim"><svg class="ic"><use href="#close"/></svg><svg class="ic"><use href="#float"/></svg><h2>Calques</h2></div>
<div class="blend"><label for="bm">Mode de fusion :</label><select class="sel plain" id="bm" disabled><option>Normal</option></select><label for="opa">Opacité :</label><input id="opa" value="100 %" disabled><svg class="steps"><use href="#steps"/></svg></div>
<table><thead><tr><th></th><th><svg class="ic"><use href="#eye"/></svg></th><th><svg class="ic"><use href="#print"/></svg></th><th><svg class="ic"><use href="#lock"/></svg></th><th><svg class="ic"><use href="#half"/></svg></th><th><svg class="ic"><use href="#outline"/></svg></th><th><svg class="ic"><use href="#cursor"/></svg></th><th class="name">Nom</th></tr></thead>
<tbody><tr><td><i class="swatch"></i></td><td><input type="checkbox" checked disabled aria-label="Visible"></td><td><input type="checkbox" checked disabled aria-label="Imprimable"></td><td><input type="checkbox" disabled aria-label="Verrouillé"></td><td><input type="checkbox" checked disabled aria-label="Habillage"></td><td><input type="checkbox" disabled aria-label="Contour"></td><td><input type="checkbox" disabled aria-label="Sélection"></td><td class="name">Fond de page</td></tr></tbody></table>
<div class="layerbtns"><button disabled aria-label="Ajouter"><svg class="ic"><use href="#plus"/></svg></button><button disabled aria-label="Supprimer"><svg class="ic"><use href="#minus"/></svg></button><button disabled aria-label="Dupliquer"><svg class="ic"><use href="#file"/></svg></button><button disabled aria-label="Monter"><svg class="ic"><use href="#up"/></svg></button><button disabled aria-label="Descendre"><svg class="ic"><use href="#down"/></svg></button></div>
</div>
<div class="props">
<div class="dockhead"><svg class="ic"><use href="#close"/></svg><svg class="ic"><use href="#float"/></svg><h2>Propriétés</h2></div>
<div class="folds open"><button>X, Y, Z</button></div>
<label class="tiny" for="nm">Nom</label>
<div class="band"><input id="nm" value="Texte14"></div>
<span class="tiny">Géométrie</span>
<div class="geo">
<div class="coords"><label for="gx">X :</label><input id="gx" value="49,327 mm"><svg class="steps"><use href="#steps"/></svg><label for="gy">Y :</label><input id="gy" value="33,311 mm"><svg class="steps"><use href="#steps"/></svg><label for="gw">Largeur :</label><input id="gw" value="108,428 mm"><svg class="steps"><use href="#steps"/></svg><label for="gh">Hauteur :</label><input id="gh" value="43,768 mm"><svg class="steps"><use href="#steps"/></svg><label for="gr">Rotation :</label><input id="gr" value="0,0 °"><svg class="steps"><use href="#steps"/></svg><svg class="chain"><use href="#chain"/></svg></div>
<div class="refpt"><span>Point de référence :</span><svg viewBox="0 0 20 20"><path d="M3 3h14v14H3z" fill="none" stroke="#333" stroke-width="1.200"/><g fill="#eee" stroke="#222" stroke-width="1.200"><circle cx="3" cy="3" r="2.200" fill="#555"/><circle cx="17" cy="3" r="2.200"/><circle cx="3" cy="17" r="2.200"/><circle cx="17" cy="17" r="2.200"/><circle cx="10" cy="10" r="2.500"/></g></svg></div>
</div>
<span class="tiny">Niveau</span>
<div class="level"><div class="order"><button aria-label="Monter"><svg class="ic"><use href="#up"/></svg></button><button aria-label="Premier plan"><svg class="ic"><use href="#top"/></svg></button><span>1</span><button aria-label="Descendre"><svg class="ic"><use href="#down"/></svg></button><button aria-label="Arrière-plan"><svg class="ic"><use href="#bottom"/></svg></button></div>
<div class="flags"><button disabled aria-label="Grouper"><svg class="ic"><use href="#grid4"/></svg></button><button aria-label="Miroir horizontal"><svg class="ic"><use href="#fliph"/></svg></button><button disabled aria-label="Verrouiller"><svg class="ic"><use href="#lock"/></svg></button><button aria-label="Verrouiller la taille"><svg class="ic"><use href="#lock"/></svg></button><button disabled aria-label="Dégrouper"><svg class="ic"><use href="#grid4o"/></svg></button><button aria-label="Miroir vertical"><svg class="ic"><use href="#flipv"/></svg></button><button aria-label="Imprimer"><svg class="ic"><use href="#print"/></svg></button></div></div>
<div class="folds five"><button>Ombre Portée</button><button>Forme</button><button>Filet</button><button>Couleurs</button><button>Transparence</button></div>
</div>
</aside>
</main>
<script src="script.js"></script>
</body>
</html>
```
FILE: styles.css
```css
* { box-sizing: border-box; }
body { margin: 0; height: 100vh; display: flex; flex-direction: column; overflow: hidden; background: #ebebeb; color: #262626; font: 7px/9px Inter, "Liberation Sans", sans-serif; }
button, input, select { font: inherit; color: inherit; margin: 0; padding: 0; border: 0; border-radius: 0; background: none; min-width: 0; }
h1, h2 { margin: 0; font: inherit; }
i { display: block; }
.defs { position: absolute; width: 0; height: 0; }
.ic { width: 7px; height: 7px; flex: none; display: block; }
.steps { width: 6px; height: 9px; flex: none; background: #f8f8f8; border-radius: 2px; color: #666; }

.menubar { display: flex; align-items: center; gap: 7px; height: 9px; padding: 0 2px 0 10px; background: linear-gradient(90deg, #c9c6d3, #cfd2d0 14%, #cfdbc0 25%, #cbd9c9 38%, #c6d7e4 50%, #d2dfdc 62%, #dce9cc 78%, #d8e2cb 90%, #d5dad0); white-space: nowrap; }
.menubar b { font-weight: 700; }
.status { display: flex; align-items: center; gap: 6px; margin-left: auto; }
.status .ic { width: 8px; height: 8px; }
.status time { margin: 0 4px; }
.dot { width: 4px; height: 4px; border-radius: 50%; background: #f19a37; }
.titlebar { display: grid; grid-template-columns: 1fr auto 1fr; align-items: center; height: 11px; background: #e2e2e2; border-top: 1px solid #b3b7b3; padding-left: 4px; }
.lights { display: flex; gap: 4px; }
.lights i { width: 5px; height: 5px; border-radius: 50%; }
.lights .red { background: #fc5b57; }
.lights .yellow { background: #fdbc40; }
.lights .green { background: #34c84a; }
.titlebar h1 { font-size: 6px; color: #444; padding-right: 4px; }
.toolbar { display: flex; align-items: center; height: 16px; padding-left: 2px; background: linear-gradient(#e0e0e0, #cbcbcb); border-bottom: 1px solid #b5b5b5; }
.toolbar button { width: 14px; height: 12px; display: grid; place-items: center; color: #2b2b2b; position: relative; }
.toolbar .ic { width: 6px; height: 6px; }
.toolbar .big .ic { width: 8px; height: 8px; }
.toolbar button.mid { color: #777; }
.toolbar button:disabled { color: #aaa; }
.toolbar button.danger { color: #e02020; }
.toolbar button.on { width: 12px; margin: 0 1px 0 4px; background: #b6b6b6; border-radius: 1px; }
.toolbar .on .ic { width: 8px; height: 8px; }
.drop { position: relative; }
.drop::after { content: ""; position: absolute; right: 0; bottom: 0; border: 2px solid transparent; border-top-color: #222; border-bottom: 0; }
.grip { width: 5px; height: 8px; border-left: 2px dotted #aaa; }
.grip.last { width: 8px; }
.toolbar .grip:first-child { width: 3px; }
.sel { appearance: none; height: 10px; line-height: 10px; padding-left: 4px; border-radius: 2px; background: #fff url("data:image/svg+xml,%3Csvg xmlns='http://www.w3.org/2000/svg' width='8' height='10'%3E%3Cpath d='M0 0h6q2 0 2 2v6q0 2-2 2H0z' fill='%231f85f5'/%3E%3Cpath d='M2.500 4L4 2.500 5.500 4M2.500 6L4 7.500 5.500 6' fill='none' stroke='%23fff' stroke-width='.9'/%3E%3C/svg%3E") right center no-repeat; box-shadow: 0 1px 1px #0002; }
.combo { background-image: url("data:image/svg+xml,%3Csvg xmlns='http://www.w3.org/2000/svg' width='8' height='10'%3E%3Cpath d='M0 0h6q2 0 2 2v6q0 2-2 2H0z' fill='%231f85f5'/%3E%3Cpath d='M2.500 4.500L4 6 5.500 4.500' fill='none' stroke='%23fff'/%3E%3C/svg%3E"); }
.plain { opacity: 1; color: #999; background: #f0f0f0 url("data:image/svg+xml,%3Csvg xmlns='http://www.w3.org/2000/svg' width='8' height='10'%3E%3Cpath d='M2.500 4L4 2 5.500 4M2.500 6L4 8 5.500 6' fill='none' stroke='%23777' stroke-width='.9'/%3E%3C/svg%3E") right center no-repeat; }
.quality { width: 35px; padding-left: 2px; }
.vision { width: 61px; margin-left: 4px; color: #b4b4b4; background-color: #e3e3e3; }

.work { flex: 1; min-height: 0; display: grid; grid-template-columns: 13px 219px minmax(0, 1fr) 208px; }
.tools { display: flex; flex-direction: column; align-items: center; background: linear-gradient(90deg, #dedede, #d0d0d0); border-right: 1px solid #b8b8b8; color: #8d8d8d; }
.tools .ic { width: 6px; height: 6px; margin: 4px 0; }
.tools .dark { width: 8px; color: #777; }
.tools .drop { padding: 0 2px; color: #777; }
.hgrip { width: 6px; height: 4px; border-bottom: 1px dotted #999; }
.space { height: 15px; }

.dockhead { display: flex; align-items: center; gap: 1px; height: 10px; padding-left: 1px; background: linear-gradient(#e0e0e0, #cdcdcd); border-bottom: 1px solid #bcbcbc; color: #555; }
.dockhead h2 { flex: 1; text-align: center; color: #333; padding-top: 1px; }
.dockhead.dim h2 { color: #888; }
.left { display: flex; flex-direction: column; min-height: 0; border-right: 1px solid #bdbdbd; }
.textprops { flex: 1; min-height: 0; border-bottom: 1px solid #c4c4c4; margin-bottom: 2px; }
.form { display: grid; padding: 4px 3px 4px 1px; border-bottom: 1px solid #d6d6d6; }
.field { display: flex; align-items: center; height: 11px; margin-bottom: 2px; }
.field input { flex: 1; height: 9px; background: #fff; padding-left: 1px; border: 1px solid #e2e2e2; }
.font { margin-left: 3px; padding-left: 2px; background: #fff; height: 10px; margin-bottom: 3px; }
.font .sel { flex: 1; padding-left: 1px; box-shadow: none; }
.wide { flex: 1; margin-left: 3px; }
.size { margin-top: 1px; gap: 1px; }
.size .steps { margin: 0 -2px 0 2px; }
.size .lead { flex: 1; margin: 0 2px 0 4px; }
.size .ic { width: 8px; }
.field .short { flex: none; width: 37px; }
.align { margin: 4px 0 7px 3px; gap: 4px; }
.seg { display: flex; border: 1px solid #c6c6c6; }
.seg button { width: 10px; height: 9px; display: grid; place-items: center; background: #f1f1f1; color: #666; }
.seg button + button { border-left: 1px solid #d2d2d2; }
.seg button.on { background: #cbcbcb; color: #333; }
.lang { flex: 1; margin-left: 12px; padding-left: 1px; }
.style { margin-bottom: 5px; gap: 3px; white-space: nowrap; }
.style:last-child { margin-bottom: 0; }
.style .sel { flex: 1; height: 11px; }
.btn { width: 9px; height: 10px; display: grid; place-items: center; background: #f8f8f8; border: 1px solid #ccc; }
.btn .ic { width: 6px; }
.folds { display: flex; flex-direction: column; justify-content: space-between; padding: 0 4px; }
.folds button { height: 9px; line-height: 9px; background: #fff; box-shadow: 0 1px 1px #0002; position: relative; padding-left: 6px; }
.folds button::before { content: ""; position: absolute; left: 0; top: 1px; border: 3px solid transparent; border-left: 6px solid #000; border-right: 0; }
.ten { min-height: 115px; margin-top: 2px; }
.five { min-height: 56px; margin-top: 22px; }
.open { margin-top: 3px; }
.folds.open button::before { border: 3px solid transparent; border-top: 6px solid #000; border-bottom: 0; }

.aligner { color: #999; border-top: 1px solid #bbb; padding-bottom: 5px; }
.tabs { display: grid; grid-template-columns: 35px 34px 43px; width: 112px; margin: 3px auto 0 52px; position: relative; z-index: 1; background: #efefef; border-radius: 2px; }
.tabs button { height: 9px; }
.tabs button + button { border-left: 1px solid #ddd; }
.tabs .cur { color: #fff; background: #e6e6e6; }
.group { margin: -5px 5px 0; min-height: 131px; background: #e2e2e2; border: 1px solid #dadada; padding: 15px 21px 0; }
.pairs { display: grid; grid-template-columns: 72px 92px; row-gap: 6px; align-items: center; white-space: nowrap; }
.pairs input { height: 10px; background: #fff; padding-left: 1px; }
.pairs .sel { margin: 0 1px; }
.pairs .sel, .pairs label { height: 10px; }
.dist { display: grid; grid-template-columns: repeat(5, 10px); gap: 5px; justify-content: center; margin-top: 8px; color: #747474; }
.dist .ic { width: 10px; height: 10px; background: #e8e8e8; }
.dist .flip { transform: scaleX(-1); }
.dist .half-turn { transform: rotate(180deg); }
.dist .quarter { transform: rotate(90deg); }
.dist .back { transform: rotate(-90deg); }

.doc { display: grid; grid-template: 11px 8px minmax(0, 1fr) 6px / 8px minmax(0, 1fr) 7px; background: #ededed; }
.doctab { grid-column: 1 / -1; display: flex; align-items: center; justify-content: center; gap: 5px; background: #d2d2d2; padding-right: 14px; color: #222; border-bottom: 1px solid #c4c4c4; }
.doctab .ic { width: 8px; height: 8px; }
.hruler { grid-column: 1 / 3; width: 100%; height: 8px; background: #f2f2f2; }
.vruler { grid-row: 3; grid-column: 1; width: 8px; height: 100%; background: #f2f2f2; }
.hruler path, .vruler path { stroke: #888; stroke-width: 1; }
.hruler .mark, .vruler .mark { stroke: #e0202c; }
.hruler text, .vruler text { font-size: 4px; fill: #777; }
.canvas { grid-row: 3; grid-column: 2; background: #949496; position: relative; overflow: hidden; }
.page { position: absolute; width: 100%; height: 100%; }
.shade { fill: #858587; }
.margin-red { fill: none; stroke: #b9808b; }
.margin-blue { fill: none; stroke: #8a87c0; }
.handle { fill: none; stroke: #c9c9d4; stroke-width: 1; }
.arc { fill: none; stroke: #5c5ab5; stroke-width: 1; }
.sample { font: 15px "Liberation Sans", Arial, sans-serif; fill: #1c1c1c; }
.vscroll { grid-row: 2 / 4; grid-column: 3; background: #fafafa; border-right: 1px solid #ccc; padding: 0 1px; }
.vscroll i { width: 4px; height: 88%; margin-top: 8px; border-radius: 2px; background: #c1c1c1; }
.hscroll { grid-row: 4; grid-column: 1 / 3; background: #fafafa; padding: 1px 1px 1px 2px; }
.hscroll i { height: 4px; border-radius: 2px; background: #c1c1c1; }

.dialog { position: absolute; left: 520px; top: 28px; width: 143px; background: #e8e8e8; padding-bottom: 5px; border-radius: 2px; box-shadow: 0 2px 5px #0006; }
.dlghead { display: flex; align-items: center; gap: 4px; height: 8px; background: #f4f4f4; padding-left: 3px; border-radius: 2px 2px 0 0; }
.dlghead i { width: 5px; height: 5px; border-radius: 50%; background: #d9d9d9; }
.dlghead h2 { flex: 1; text-align: center; font-size: 6px; color: #aaa; padding-right: 30px; }
.nodes { display: grid; grid-template-columns: repeat(4, 1fr); grid-auto-rows: 16px; padding: 1px 2px 0; }
.nodes button, .xform button { display: grid; place-items: center; background: #f1f1f1; border: 1px solid #cfcfcf; }
.nodes .on { background: #cbcbcb; border-color: #bcbcbc; }
.nodes button:disabled { background: #e9e9e9; border-color: #dadada; color: #8a8a8a; }
.nodes .ic { width: 9px; height: 9px; }
.nodes .big { width: 11px; height: 11px; }
.xform { display: grid; grid-template-columns: 15px 15px 1fr 6px; gap: 3px 2px; align-items: center; padding: 2px 3px 0 2px; }
.xform button { height: 14px; }
.xform .ic { width: 8px; height: 8px; }
.xform input, .xy input { height: 8px; line-height: 8px; background: #fff; padding-left: 2px; }
.opt { display: flex; align-items: center; gap: 2px; height: 10px; padding-left: 5px; white-space: nowrap; }
.opt input { appearance: none; width: 6px; height: 6px; background: #f8f8f8; border: 1px solid #ddd; border-radius: 1px; }
.opt input[type=radio] { border-radius: 50%; }
.opt input[type=radio]:checked { background: radial-gradient(#999 1px, #f0f0f0 2px); }
.opt.small { font-size: 5px; padding-left: 9px; gap: 1px; margin-top: 4px; height: 9px; }
.opt.small input { width: 5px; height: 5px; }
fieldset { margin: 1px 5px 2px; padding: 4px 3px; border: 0; border-radius: 2px; background: #dedede; color: #a2a2a2; }
fieldset .opt { height: 9px; padding: 0; gap: 3px; }
.xy { display: grid; grid-template-columns: 56px 1fr 6px; row-gap: 3px; column-gap: 1px; padding: 1px 6px 0 5px; }
.actions { display: grid; grid-template-columns: 1fr 1fr; gap: 2px; padding: 2px 5px 0; }
.actions button { height: 11px; background: #f3f3f3; border: 1px solid #cdcdcd; white-space: nowrap; }
.actions .full { grid-column: 1 / 3; }
.actions button:disabled { background: #e6e6e6; color: #aaa; border-color: #d9d9d9; }
.actions .ok { display: flex; align-items: center; justify-content: center; gap: 4px; background: #c9c9c9; color: #f4f4f4; }
.ok .ic { color: #333; }

.right { overflow: hidden; border-left: 1px solid #bbb; min-width: 0; }
.layers { color: #999; border-bottom: 1px solid #bbb; padding-bottom: 1px; }
.blend { display: flex; align-items: center; gap: 4px; height: 16px; padding: 0 2px 0 1px; white-space: nowrap; }
.blend .sel { flex: 1; }
.blend input { width: 26px; height: 8px; background: #f8f8f8; padding-left: 1px; }
.blend .steps { margin-left: -2px; }
.layers table { width: 202px; border-collapse: collapse; margin: 1px 4px 0 1px; border-bottom: 6px solid #fff; table-layout: fixed; }
.layers th, .layers td { width: 11px; height: 13px; padding: 0 2px; font-weight: 400; }
.layers th { border: 1px solid #d5d5d5; color: #666; }
.layers td { background: #dadada; height: 15px; }
.layers th.name, .layers td.name { width: auto; color: #999; }
.layers td.name { padding-left: 3px; }
.layers td input { appearance: none; display: block; width: 6px; height: 6px; background: #e9e9e9; border-radius: 1px; }
.layers td input:checked { background: url("data:image/svg+xml,%3Csvg xmlns='http://www.w3.org/2000/svg' viewBox='0 0 6 6'%3E%3Cpath d='M1.500 3L2.700 4.500 5 1.500' fill='none' stroke='%23555'/%3E%3C/svg%3E") #e9e9e9; }
.swatch { width: 8px; height: 7px; background: #6e6e6e; }
.layerbtns { display: flex; justify-content: flex-end; gap: 2px; padding: 5px 4px 0; }
.layerbtns button { width: 16px; height: 9px; display: grid; place-items: center; background: #f0f0f0; color: #888; }
.layerbtns .ic { width: 6px; height: 6px; }
.props { display: flex; flex-direction: column; }
.tiny { font-size: 5px; line-height: 8px; height: 11px; padding: 2px 0 0 4px; color: #444; }
.band { background: #e2e2e2; padding: 3px 3px 2px; }
.band input { width: 100%; height: 10px; display: block; background: #fff; padding-left: 1px; }
.geo { background: #e2e2e2; padding: 5px 5px 6px; margin-top: 1px; }
.coords { display: grid; grid-template-columns: 1fr 65px 6px 8px; row-gap: 3px; column-gap: 2px; align-items: center; }
.coords label { grid-column: 1; height: 9px; }
.coords input { height: 8px; line-height: 8px; background: #fff; padding-left: 1px; }
.chain { grid-column: 4; grid-row: 3 / 5; width: 10px; height: 20px; }
.refpt { display: grid; grid-template-columns: 1fr 81px; align-items: center; padding-top: 2px; }
.refpt svg { width: 20px; height: 20px; }
.level { display: flex; justify-content: space-between; align-items: flex-start; margin-top: 4px; }
.order { display: grid; grid-template-columns: 11px 11px 7px; gap: 1px; padding: 2px 4px; background: #e0e0e0; align-items: center; }
.order span { grid-row: 1 / 3; grid-column: 3; text-align: center; }
.order button, .flags button { width: 11px; height: 11px; display: grid; place-items: center; background: #f4f4f4; border: 1px solid #d2d2d2; }
.flags { display: grid; grid-template-columns: repeat(4, 11px); gap: 6px 4px; margin: -2px 0 0; }
.flags button:disabled { color: #999; border-color: #ddd; background: #ebebeb; }
```
FILE: script.js
```js
const NS = "http://www.w3.org/2000/svg";
function add(svg, name, attrs, text) {
  const el = document.createElementNS(NS, name);
  for (const k in attrs) el.setAttribute(k, attrs[k]);
  if (text) el.textContent = text;
  svg.appendChild(el);
}
const MM = 2;
function horizontal(svg, origin, length) {
  let d = "";
  for (let i = -40; origin + i * MM < length - 2; i++) {
    const x = origin + i * MM + 0.5;
    d += `M${x} 8v${i % 10 === 0 ? -5 : -3}`;
    if (i % 10 === 0 && x + 10 < length) add(svg, "text", { x: x + 1, y: 4 }, String(Math.abs(i)));
  }
  add(svg, "path", { d });
  add(svg, "path", { d: `M${origin + 300.5} 1v7`, class: "mark" });
}
function vertical(svg, origin, length) {
  let d = "";
  for (let i = 0; origin + i * MM < length; i++) {
    const y = origin + i * MM + 0.5;
    d += `M8 ${y}h${i % 10 === 0 ? -4 : -2}`;
    if (i % 10 === 0) [...String(i)].forEach((c, n) => add(svg, "text", { x: 1, y: y + 4 + n * 4 }, c));
  }
  for (let y = origin - 2; y > 0; y -= 2) d += `M8 ${y + 0.5}h-2`;
  add(svg, "path", { d });
  add(svg, "path", { d: "M0 89.500h7", class: "mark" });
}
const h = document.getElementById("hruler"), v = document.getElementById("vruler");
horizontal(h, 88, h.clientWidth);
vertical(v, 17, v.clientHeight);
```
